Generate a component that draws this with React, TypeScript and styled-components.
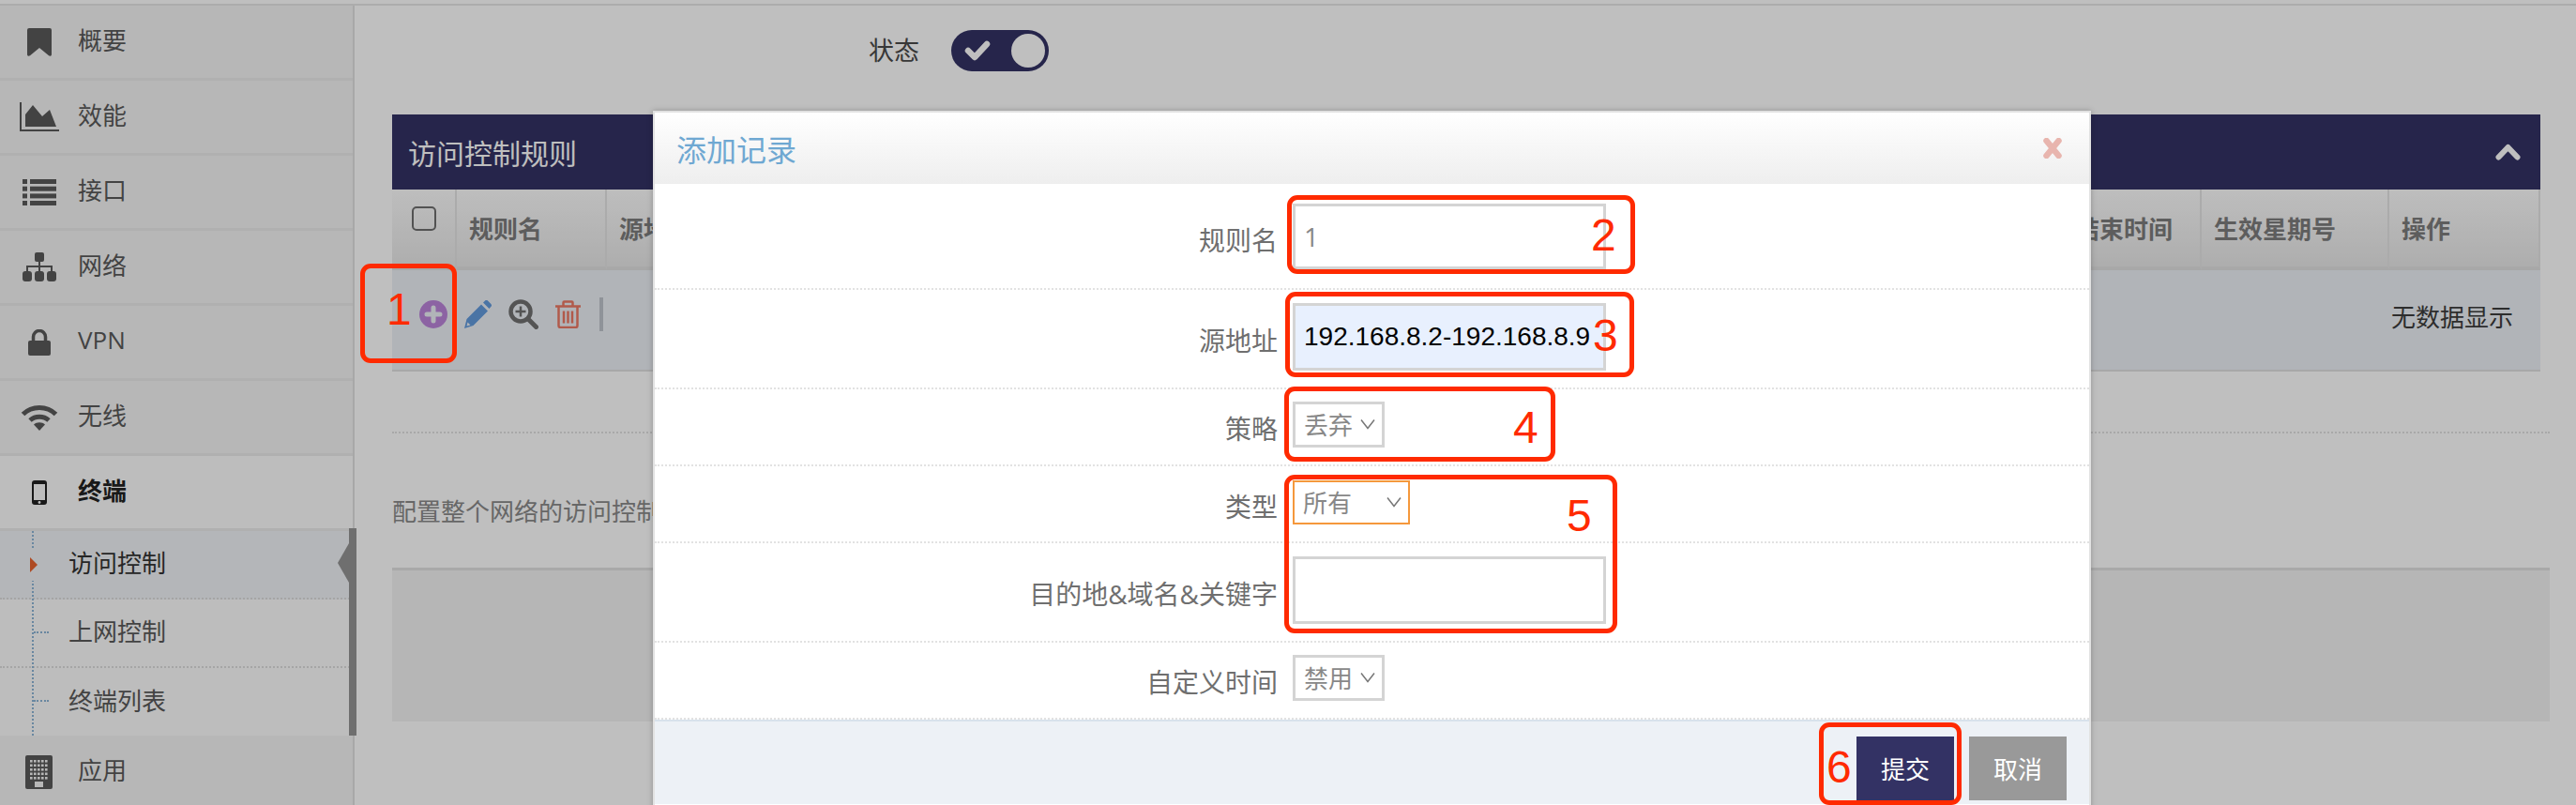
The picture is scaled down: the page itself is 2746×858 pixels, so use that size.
import React from "react";
import styled, { createGlobalStyle } from "styled-components";

const GlobalStyle = createGlobalStyle`
  html, body { margin: 0; padding: 0; background: #fff; }
  * { box-sizing: border-box; }
`;

const FONT = `"Open Sans", "Noto Sans CJK SC", sans-serif`;

const Page = styled.div`
  position: relative;
  width: 2746px;
  height: 858px;
  overflow: hidden;
  padding-top: 4px;
  font-family: ${FONT};
  font-size: 26px;
  background: #fff;
`;
const Shell = styled.div`
  display: flex;
  height: 854px;
  border-top: 2px solid #e6e6e6;
`;

/* sidebar */
const Sidebar = styled.nav`
  flex: none;
  width: 378px;
  background: #f5f5f5;
  border-right: 2px solid #e0e0e0;
`;
const NavItem = styled.div<{ $active?: boolean }>`
  display: flex;
  align-items: center;
  height: 80px;
  border-bottom: 3px solid #ebebeb;
  background: ${(p) => (p.$active ? "#fcfcfc" : "transparent")};
  color: ${(p) => (p.$active ? "#222" : "#5a5a5a")};
  font-weight: ${(p) => (p.$active ? 700 : 400)};
`;
const NavIcon = styled.span`
  display: flex;
  justify-content: center;
  flex: none;
  width: 83px;
`;
const NavText = styled.span`
  padding-bottom: 5px;
`;
const SubGroup = styled.div`
  position: relative;
  z-index: 0;
`;
const ActiveBar = styled.div`
  position: absolute;
  z-index: 1;
  top: -3px;
  right: -4px;
  bottom: 0;
  width: 8px;
  background: #959595;
`;
const TreeLine = styled.div`
  position: absolute;
  z-index: 1;
  top: 0;
  bottom: 0;
  left: 34px;
  border-left: 2px dotted #8cb4d6;
`;
const SubItem = styled.div<{ $active?: boolean }>`
  position: relative;
  display: flex;
  align-items: center;
  height: 73px;
  padding: 0 0 5px 73px;
  border-bottom: 2px dotted #dcdcdc;
  background: ${(p) => (p.$active ? "#f1f3f7" : "#fcfcfc")};
  color: ${(p) => (p.$active ? "#333" : "#5a5a5a")};
  &:last-of-type { height: 72px; border-bottom: 0; }
`;
const Branch = styled.span`
  position: absolute;
  left: 36px;
  top: 34px;
  width: 16px;
  border-top: 2px dotted #8cb4d6;
`;
const Marker = styled.span`
  position: absolute;
  z-index: 2;
  left: 30px;
  top: 19px;
  width: 12px;
  height: 34px;
  background: #f1f3f7;
  &::after {
    content: "";
    position: absolute;
    left: 2px;
    top: 9px;
    border-left: 8px solid #e8632e;
    border-top: 8px solid transparent;
    border-bottom: 8px solid transparent;
  }
`;
const Notch = styled.span`
  position: absolute;
  z-index: 2;
  right: 4px;
  top: 13px;
  width: 12px;
  height: 42px;
  background: #959595;
  clip-path: polygon(100% 0, 100% 100%, 0 50%);
`;

/* main column */
const Main = styled.main`
  flex: 1;
  min-width: 0;
  padding: 0 28px 0 40px;
`;
const StatusRow = styled.div`
  display: flex;
  gap: 34px;
  height: 116px;
  padding: 26px 0 0 508px;
`;
const StatusLabel = styled.span`
  line-height: 44px;
  font-size: 27px;
  color: #4a4a4a;
`;
const Toggle = styled.span`
  display: flex;
  align-items: center;
  justify-content: space-between;
  width: 104px;
  height: 44px;
  padding: 0 4px 0 14px;
  border-radius: 22px;
  background: #333264;
`;
const Knob = styled.span`
  width: 36px;
  height: 36px;
  border-radius: 50%;
  background: #fff;
`;
const Panel = styled.section`
  width: 2290px;
`;
const PanelHead = styled.header`
  display: flex;
  align-items: center;
  justify-content: space-between;
  height: 80px;
  padding: 0 21px 0 17px;
  background: #333264;
  color: #fff;
  font-size: 30px;
`;
const Table = styled.table`
  width: 100%;
  table-layout: fixed;
  border-collapse: separate;
  border-spacing: 0;
`;
const Th = styled.th<{ $w: number }>`
  width: ${(p) => p.$w}px;
  height: 86px;
  padding: 0 0 0 13px;
  text-align: left;
  font-weight: 700;
  color: #7c7c7c;
  white-space: nowrap;
  overflow: hidden;
  background: linear-gradient(#fdfdfd, #e8e8e8);
  border-right: 2px solid #e4e4e4;
  border-bottom: 4px solid #e0e0e0;
`;
const CheckTh = styled(Th)`
  vertical-align: top;
  padding: 18px 0 0 21px;
`;
const Check = styled.input`
  appearance: none;
  display: block;
  width: 26px;
  height: 26px;
  margin: 0;
  border: 2px solid #6e6e6e;
  border-radius: 5px;
  background: transparent;
`;
const Td = styled.td`
  height: 108px;
  padding: 0;
  background: #edf1f6;
  border-bottom: 2px solid #e0e0e0;
`;
const RowInner = styled.div`
  display: flex;
  align-items: center;
  justify-content: space-between;
  padding: 0 29px 12px 29px;
`;
const Tools = styled.div`
  display: flex;
  align-items: center;
  gap: 18px;
`;
const Divider = styled.span`
  width: 4px;
  height: 36px;
  margin-left: 2px;
  background: #bfc5cc;
`;
const EmptyText = styled.span`
  padding-top: 4px;
  color: #3c3c3c;
`;
const Rule = styled.hr`
  margin: 64px 0 0;
  border: 0;
  border-top: 2px dotted #e0e0e0;
`;
const Description = styled.p`
  margin: 0;
  padding: 63px 0 40px;
  line-height: 40px;
  color: #8a8a8a;
`;
const GreyBox = styled.div`
  height: 164px;
  background: #f3f3f3;
  border-top: 3px solid #e2e2e2;
`;

/* dim layer + dialog */
const Backdrop = styled.div`
  position: absolute;
  inset: 0;
  background: rgba(0, 0, 0, 0.25);
`;
const Modal = styled.div`
  position: absolute;
  left: 696px;
  top: 118px;
  width: 1533px;
  height: 760px;
  background: #fff;
  border: 2px solid #e2e2e2;
  box-shadow: 0 0 6px rgba(0, 0, 0, 0.25);
`;
const ModalHead = styled.div`
  display: flex;
  align-items: center;
  justify-content: space-between;
  height: 76px;
  padding: 0 28px 0 23px;
  background: linear-gradient(#fff, #eee);
  color: #6fa8d2;
  font-size: 32px;
`;
const FormRow = styled.div<{ $top: number; $bottom: number }>`
  display: grid;
  grid-template-columns: 664px 1fr;
  column-gap: 16px;
  align-items: center;
  padding: ${(p) => p.$top}px 0 ${(p) => p.$bottom}px;
  border-bottom: 2px dotted #e2e2e2;
`;
const Label = styled.label`
  padding-top: 6px;
  text-align: right;
  font-size: 28px;
  color: #6f6f6f;
`;
const TextField = styled.div<{ $h: number; $filled?: boolean }>`
  display: flex;
  align-items: center;
  width: 334px;
  height: ${(p) => p.$h}px;
  padding-left: 9px;
  border: 3px solid #d4d4d4;
  background: ${(p) => (p.$filled ? "#e8f0fe" : "#fff")};
  color: ${(p) => (p.$filled ? "#000" : "#888")};
  font-family: ${(p) => (p.$filled ? `"Liberation Sans", sans-serif` : "inherit")};
  font-size: 28px;
  white-space: nowrap;
`;
const Select = styled.div<{ $w: number; $focus?: boolean }>`
  display: flex;
  align-items: center;
  justify-content: space-between;
  width: ${(p) => p.$w}px;
  height: ${(p) => (p.$focus ? 47 : 49)}px;
  padding: 0 7px 2px 9px;
  border: ${(p) => (p.$focus ? "2px solid #f5983c" : "3px solid #d4d4d4")};
  color: #888;
`;
const Footer = styled.div`
  display: flex;
  justify-content: flex-end;
  gap: 16px;
  height: 90px;
  padding: 16px 24px 0 0;
  background: #edf1f6;
  border-top: 2px solid #d8e2ec;
`;
const Button = styled.button<{ $primary?: boolean }>`
  width: 104px;
  height: 68px;
  border: 0;
  padding: 0;
  font: inherit;
  color: #fff;
  background: ${(p) => (p.$primary ? "#333264" : "#999")};
`;

/* red notes drawn over the screenshot */
const NoteBox = styled.div<{ $x: number; $y: number; $w: number; $h: number }>`
  position: absolute;
  left: ${(p) => p.$x}px;
  top: ${(p) => p.$y}px;
  width: ${(p) => p.$w}px;
  height: ${(p) => p.$h}px;
  border: 5px solid #ff2a00;
  border-radius: 11px;
`;
const NoteNum = styled.span<{ $x: number; $y: number }>`
  position: absolute;
  left: ${(p) => p.$x}px;
  top: ${(p) => p.$y}px;
  font: 48px/48px "Liberation Sans", sans-serif;
  color: #ff2a00;
`;

const ICON = "#5a5a5a";

const Bookmark = () => (
  <svg width="26" height="30" viewBox="0 0 26 30">
    <path fill={ICON} d="M2 0h22a2 2 0 0 1 2 2v26c0 1.6-1.6 2.3-3 1.3L13 21 3 29.3C1.600 30.300 0 29.600 0 28V2a2 2 0 0 1 2-2z" />
  </svg>
);
const AreaChart = () => (
  <svg width="42" height="31" viewBox="0 0 42 31">
    <path fill={ICON} d="M0 0h2v29h40v2H0z" />
    <path fill={ICON} d="M6 26V13l8-10 10 12 8-7 7 18z" />
  </svg>
);
const ListIcon = () => (
  <svg width="36" height="28" viewBox="0 0 36 28">
    {[0, 7.7, 15.400, 23].map((y) => (
      <g key={y} fill={ICON}>
        <rect x="0" y={y} width="5" height="5" />
        <rect x="8" y={y} width="28" height="5" />
      </g>
    ))}
  </svg>
);
const Sitemap = () => (
  <svg width="36" height="31" viewBox="0 0 36 31">
    <rect x="13" y="0" width="10" height="10" rx="2" fill={ICON} />
    <path d="M18 10v11M5 21v-6h26v6" fill="none" stroke={ICON} strokeWidth="2" />
    {[0, 13, 26].map((x) => (
      <rect key={x} x={x} y="20" width="10" height="11" rx="3" fill={ICON} />
    ))}
  </svg>
);
const Lock = () => (
  <svg width="24" height="28" viewBox="0 0 24 28">
    <path d="M5.500 13V8a6.500 6.500 0 0 1 13 0v5" fill="none" stroke={ICON} strokeWidth="3.500" />
    <rect x="0" y="12" width="24" height="16" rx="2" fill={ICON} />
  </svg>
);
const Wifi = () => (
  <svg width="40" height="28" viewBox="0 0 40 28">
    <path d="M2.500 10.500C12 1 28 1 37.500 10.500M10 17c5.500-5 14.500-5 20 0" fill="none" stroke={ICON} strokeWidth="5" />
    <path fill={ICON} d="M20 28l-6-6.500c3-3 9-3 12 0z" />
  </svg>
);
const Mobile = () => (
  <svg width="16" height="26" viewBox="0 0 16 26">
    <rect width="16" height="26" rx="3" fill="#222" />
    <rect x="2" y="4" width="12" height="17" fill="#fcfcfc" />
    <circle cx="8" cy="23.500" r="1.400" fill="#fcfcfc" />
  </svg>
);
const Building = () => (
  <svg width="29" height="36" viewBox="0 0 29 36">
    <rect width="29" height="36" rx="2" fill={ICON} />
    {[5, 9.500, 14, 18.500, 23].flatMap((y) =>
      [5, 9, 13, 17, 21].map((x) => (
        <rect key={`${x}-${y}`} x={x} y={y} width="2.600" height="2.600" fill="#f5f5f5" />
      )),
    )}
    <rect x="10" y="28" width="9" height="6" fill="#f5f5f5" />
  </svg>
);
const CheckMark = () => (
  <svg width="28" height="22" viewBox="0 0 28 22">
    <path d="M4 11l7 7L24 4" fill="none" stroke="#fff" strokeWidth="6.500" strokeLinecap="round" strokeLinejoin="round" />
  </svg>
);
const ChevronUp = () => (
  <svg width="27" height="18" viewBox="0 0 27 18">
    <path d="M3.500 14.500L13.500 4l10 10.500" fill="none" stroke="#fff" strokeWidth="6" strokeLinecap="round" strokeLinejoin="round" />
  </svg>
);
const PlusCircle = () => (
  <svg width="30" height="30" viewBox="0 0 30 30">
    <circle cx="15" cy="15" r="15" fill="#bb84da" />
    <path d="M15 8v14M8 15h14" stroke="#edf1f6" strokeWidth="5" strokeLinecap="round" />
  </svg>
);
const Pencil = () => (
  <svg width="29" height="30" viewBox="0 0 29 30">
    <path fill="#639bdd" d="M0 30l2.500-10L18 4.500 25 11.500 9.500 27zM20 2.500l1.800-1.800a2.400 2.400 0 0 1 3.400 0l3 3a2.400 2.400 0 0 1 0 3.400L26.500 9z" />
    <path fill="#edf1f6" d="M2.500 27.500l1-4 3 3z" />
  </svg>
);
const Magnifier = () => (
  <svg width="32" height="32" viewBox="0 0 32 32">
    <circle cx="13" cy="13" r="10.500" fill="none" stroke="#717171" strokeWidth="4.500" />
    <path d="M21 21l8.500 8.500" stroke="#717171" strokeWidth="5" strokeLinecap="round" />
    <path d="M7.500 13h11M13 7.500v11" stroke="#717171" strokeWidth="2.500" />
  </svg>
);
const Trash = () => (
  <svg width="27" height="30" viewBox="0 0 27 30">
    <g fill="none" stroke="#ed7965" strokeWidth="2.500">
      <path d="M0 6.500h27M8.500 6V2.500a1 1 0 0 1 1-1h8a1 1 0 0 1 1 1V6M3.500 7v20a2 2 0 0 0 2 2h16a2 2 0 0 0 2-2V7" />
      <path d="M9 11.500v13M13.500 11.500v13M18 11.500v13" />
    </g>
  </svg>
);
const Close = () => (
  <svg width="22" height="22" viewBox="0 0 22 22">
    <path d="M4.500 3l13 16M17.500 3l-13 16" stroke="#e8b5ae" strokeWidth="6.500" strokeLinecap="round" />
  </svg>
);
const Caret = () => (
  <svg width="16" height="12" viewBox="0 0 16 12">
    <path d="M1 1.500l7 9 7-9" fill="none" stroke="#777" strokeWidth="1.500" />
  </svg>
);

const navTop = [
  { label: "概要", icon: <Bookmark /> },
  { label: "效能", icon: <AreaChart /> },
  { label: "接口", icon: <ListIcon /> },
  { label: "网络", icon: <Sitemap /> },
  { label: "VPN", icon: <Lock /> },
  { label: "无线", icon: <Wifi /> },
];

const columns = [
  { title: "规则名", w: 160 },
  { title: "源地址", w: 360 },
  { title: "目的地", w: 400 },
  { title: "策略", w: 200 },
  { title: "类型", w: 200 },
  { title: "开始时间", w: 392 },
  { title: "结束时间", w: 148 },
  { title: "生效星期号", w: 200 },
  { title: "操作", w: 161 },
];

const noteBoxes = [
  { x: 384, y: 281, w: 103, h: 106 },
  { x: 1372, y: 208, w: 371, h: 84 },
  { x: 1370, y: 311, w: 372, h: 91 },
  { x: 1369, y: 412, w: 289, h: 80 },
  { x: 1369, y: 506, w: 355, h: 169 },
  { x: 1939, y: 770, w: 152, h: 88 },
];

const noteNums = [
  { n: 1, x: 412, y: 306 },
  { n: 2, x: 1696, y: 227 },
  { n: 3, x: 1698, y: 334 },
  { n: 4, x: 1613, y: 432 },
  { n: 5, x: 1670, y: 526 },
  { n: 6, x: 1947, y: 794 },
];

const App = () => (
  <Page>
    <GlobalStyle />
    <Shell>
      <Sidebar>
        {navTop.map((item) => (
          <NavItem key={item.label}>
            <NavIcon>{item.icon}</NavIcon>
            <NavText>{item.label}</NavText>
          </NavItem>
        ))}
        <NavItem $active>
          <NavIcon>
            <Mobile />
          </NavIcon>
          <NavText>终端</NavText>
        </NavItem>
        <SubGroup>
          <ActiveBar />
          <TreeLine />
          <SubItem $active>
            <Marker />
            访问控制
            <Notch />
          </SubItem>
          <SubItem>
            <Branch />
            上网控制
          </SubItem>
          <SubItem>
            <Branch />
            终端列表
          </SubItem>
        </SubGroup>
        <NavItem>
          <NavIcon>
            <Building />
          </NavIcon>
          <NavText>应用</NavText>
        </NavItem>
      </Sidebar>
      <Main>
        <StatusRow>
          <StatusLabel>状态</StatusLabel>
          <Toggle>
            <CheckMark />
            <Knob />
          </Toggle>
        </StatusRow>
        <Panel>
          <PanelHead>
            访问控制规则
            <ChevronUp />
          </PanelHead>
          <Table>
            <thead>
              <tr>
                <CheckTh $w={69}>
                  <Check type="checkbox" />
                </CheckTh>
                {columns.map((c) => (
                  <Th key={c.title} $w={c.w}>
                    {c.title}
                  </Th>
                ))}
              </tr>
            </thead>
            <tbody>
              <tr>
                <Td colSpan={10}>
                  <RowInner>
                    <Tools>
                      <PlusCircle />
                      <Pencil />
                      <Magnifier />
                      <Trash />
                      <Divider />
                    </Tools>
                    <EmptyText>无数据显示</EmptyText>
                  </RowInner>
                </Td>
              </tr>
            </tbody>
          </Table>
        </Panel>
        <Rule />
        <Description>配置整个网络的访问控制规则</Description>
        <GreyBox />
      </Main>
    </Shell>
    <Backdrop />
    <Modal>
      <ModalHead>
        添加记录
        <Close />
      </ModalHead>
      <FormRow $top={21} $bottom={20}>
        <Label>规则名</Label>
        <TextField $h={70}>1</TextField>
      </FormRow>
      <FormRow $top={14} $bottom={18}>
        <Label>源地址</Label>
        <TextField $h={72} $filled>
          192.168.8.2-192.168.8.9
        </TextField>
      </FormRow>
      <FormRow $top={13} $bottom={18}>
        <Label>策略</Label>
        <Select $w={98}>
          丢弃
          <Caret />
        </Select>
      </FormRow>
      <FormRow $top={15} $bottom={18}>
        <Label>类型</Label>
        <Select $w={125} $focus>
          所有
          <Caret />
        </Select>
      </FormRow>
      <FormRow $top={14} $bottom={18}>
        <Label>目的地&amp;域名&amp;关键字</Label>
        <TextField $h={72} />
      </FormRow>
      <FormRow $top={13} $bottom={18}>
        <Label>自定义时间</Label>
        <Select $w={98}>
          禁用
          <Caret />
        </Select>
      </FormRow>
      <Footer>
        <Button $primary>提交</Button>
        <Button>取消</Button>
      </Footer>
    </Modal>
    {noteBoxes.map((b) => (
      <NoteBox key={b.x} $x={b.x} $y={b.y} $w={b.w} $h={b.h} />
    ))}
    {noteNums.map((d) => (
      <NoteNum key={d.n} $x={d.x} $y={d.y}>
        {d.n}
      </NoteNum>
    ))}
  </Page>
);

export default App;
